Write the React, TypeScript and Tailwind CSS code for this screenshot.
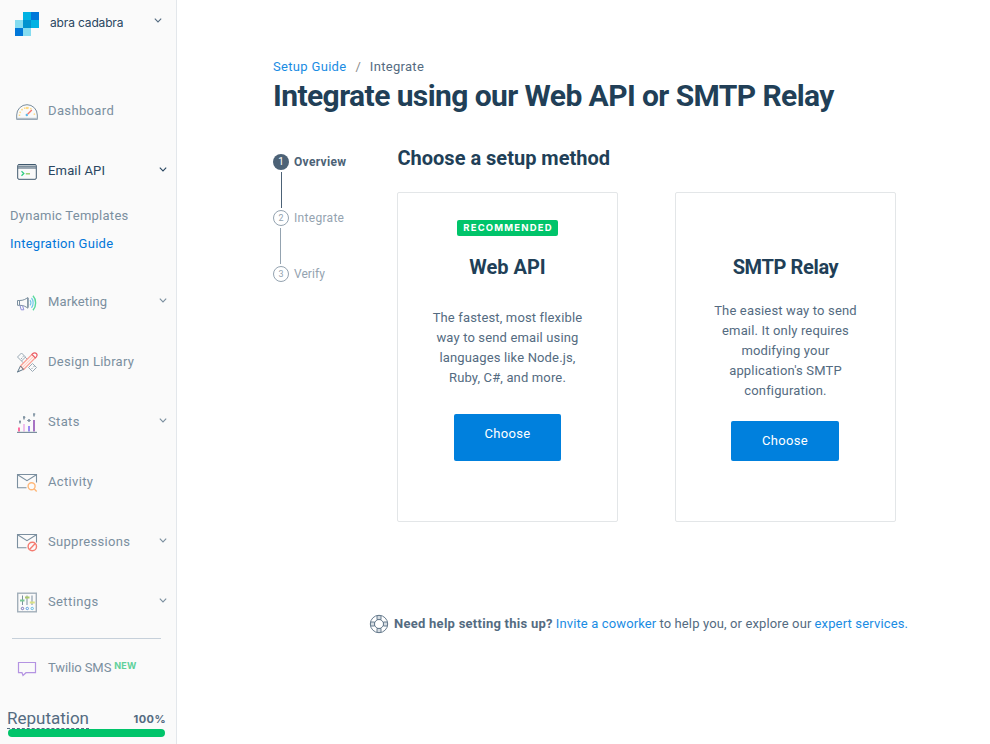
import type { ReactNode } from "react";

const slate = "#7b8f9f";

function Chevron({ className = "" }: { className?: string }) {
  return (
    <svg className={className} width="8" height="5" viewBox="0 0 8 5" fill="none" stroke="currentColor" strokeWidth="1.1">
      <path d="M0.8 0.7 4 3.9 7.2 0.7" />
    </svg>
  );
}

function Logo() {
  return (
    <svg width="24" height="24" viewBox="0 0 24 24" shapeRendering="crispEdges">
      <path fill="#00b2e3" d="M8 0h8v8H8zM16 8h8v8h-8z" />
      <path fill="#0077d9" d="M16 0h8v8h-8zM0 16h8v8H0z" />
      <path fill="#85dcf0" d="M0 8h8v8H0zM8 16h8v8H8z" />
      <path fill="#0093d0" d="M8 8h8v8H8z" />
    </svg>
  );
}

function Icon({ children }: { children: ReactNode }) {
  return (
    <svg className="shrink-0" width="22" height="22" viewBox="0 0 22 22" fill="none" stroke={slate} strokeWidth="1">
      {children}
    </svg>
  );
}

const DashboardIcon = () => (
  <Icon>
    <path d="M.7 19.400V15a10.300 10.300 0 0 1 20.600 0v4.400z" />
    <path d="M.7 18.600h20.600" stroke="#b4bfc8" strokeWidth="1.600" />
    <path d="M3.500 16a7.600 7.600 0 0 1 13-6M18.200 13.500a7 7 0 0 1 .4 2.500" stroke="#ffd982" strokeWidth="1.500" strokeDasharray="1.500 1.600" />
    <path d="M9.800 8h2.600" stroke="#ffd982" strokeWidth="2.200" />
    <path d="m11.600 14.300 4.200-4.300" stroke="#f5796c" strokeWidth="1.400" />
    <circle cx="10.800" cy="15" r="1.200" fill="#5cb9e8" stroke="none" />
  </Icon>
);

const EmailIcon = () => (
  <Icon>
    <rect x="1.700" y="4.500" width="18.600" height="14.800" rx="1.300" stroke="#40596e" />
    <path d="M2 6.300h18" stroke="#7c8e9c" strokeWidth="1.600" />
    <path d="M2 8h18" stroke="#40596e" />
    <path d="m5.500 11.200 2.300 2.200-2.300 2.300" stroke="#2dcc80" strokeWidth="1.300" />
    <path d="M9.800 13.800h4.200" stroke="#8bc75b" strokeWidth="1.300" />
  </Icon>
);

const MarketingIcon = () => (
  <Icon>
    <g transform="translate(0 1)">
      <path d="M1.500 8.500h2v4.800h-2zM3.500 8.500c4 0 6-1.300 8.300-3v10.700c-2.300-1.800-4.300-2.900-8.300-2.900z" />
      <path d="m4 13.500 1.200 4.300h2.600L6.500 13.500" stroke="#8f8edb" />
      <path d="M12 6v9.500" strokeWidth="1.300" />
      <path d="M14 8.200c1 1.300 1 3.800 0 5.200M15.500 6c2.200 2.300 2.200 7.400 0 9.800" stroke="#70c7e9" strokeWidth="1.200" />
      <path d="M17 3.700c3.500 3.800 3.500 10.600 0 14.500" stroke="#57d99b" strokeWidth="1.400" />
    </g>
  </Icon>
);

const DesignIcon = () => (
  <Icon>
    <g transform="translate(0 .5)">
      <path d="m5.500 1.500 4 4-4 4-4-4zM9 5.500l2.500 2.500M5.500 9.500l2.500 2.500M12.500 16l4 4 4-4-4-4z" stroke="#9aa9b5" />
      <path d="m6.500 5.500 1.300-1M5 7.500l1-1M15.500 17.500l1.200-1.200M17.500 15.500l1-1" stroke="#9aa9b5" />
      <path d="M4.500 14.500 16.300 2.700l3.300 3.300L7.600 18z" fill="#fff3f0" stroke="#fa9f94" strokeWidth="1.200" />
      <path d="M6 16.300 17.800 4.500" stroke="#fdc8bf" />
      <path d="m16 3 1-1c1-1 2.500-.8 3.300 0s1 2.200 0 3.300l-1 1z" stroke="#ec5e66" fill="#fafafa" strokeWidth="1.200" />
      <path d="m4.500 14.500-3 6 6-2.700zM1.500 20.500l1.800-1" stroke="#61788a" />
    </g>
  </Icon>
);

const StatsIcon = () => (
  <Icon>
    <path d="M3 20.500v-4" stroke="#ff6da0" strokeWidth="2" />
    <path d="M8 20.500V13" stroke="#efbfec" strokeWidth="2" />
    <path d="M13 20.500V15" stroke="#9b89f5" strokeWidth="2" />
    <path d="M18 20.500V9" stroke="#a773c4" strokeWidth="2" />
    <path d="M1 21.400h20" strokeWidth="1.200" />
    <path d="M4 9.500v3M8 5v3.500M13 8v3M18 2.500v3" strokeWidth="1.500" />
    <path d="M3 10.700h2M7 6.300h2.400M11.200 9.500h3.600M17 3h2.300" />
  </Icon>
);

const Envelope = () => <path d="M20.500 11.500v-8h-19v13.200h9M1.600 3.800 11 9.700l9.400-5.900" strokeWidth="1.100" />;

const ActivityIcon = () => (
  <Icon>
    <Envelope />
    <circle cx="15.600" cy="15.200" r="3.500" stroke="#ffb778" strokeWidth="1.400" fill="#fafafa" />
    <path d="m18.100 17.700 2.600 2.800" stroke="#ffb778" strokeWidth="1.400" />
  </Icon>
);

const SuppressionsIcon = () => (
  <Icon>
    <Envelope />
    <circle cx="16.300" cy="15.500" r="4.200" stroke="#f47b70" strokeWidth="1.400" fill="#fafafa" />
    <path d="m13.500 18.400 5.700-5.800" stroke="#f47b70" strokeWidth="1.400" />
  </Icon>
);

const SettingsIcon = () => (
  <Icon>
    <g transform="translate(0 .5)">
      <rect x="1.700" y="1.700" width="18.600" height="18.600" strokeWidth="1.400" stroke="#a2afba" />
      <path d="M6.500 4v9.500M11 4v9.500M16 4v9.500" />
      <path d="M4 9h4.500" stroke="#7bc894" strokeWidth="2" />
      <path d="M9 6h4.500" stroke="#aac96b" strokeWidth="2" />
      <path d="M13.800 11h5" stroke="#dbe384" strokeWidth="2" />
      <circle cx="6.500" cy="17" r="1.200" stroke="#7871b8" />
      <circle cx="11.300" cy="17" r="1.200" stroke="#5d9fe0" />
      <circle cx="16.200" cy="17" r="1.200" stroke="#65bfe5" />
    </g>
  </Icon>
);

const SmsIcon = () => (
  <Icon>
    <path d="M2.500 5.500h17v10.200H10L7 18.500l-1-2.800H2.500z" stroke="#b493e2" strokeWidth="1.200" />
  </Icon>
);

function NavItem({ icon, children, chevron, active }: { icon: ReactNode; children: ReactNode; chevron?: boolean; active?: boolean }) {
  return (
    <a className={`flex h-[60px] items-center pl-4 pr-[9px] text-[13px] leading-5 ${active ? "text-[#294661]" : "text-[#7b8f9f]"}`}>
      <div className="flex h-5 w-8 shrink-0 items-center">{icon}</div>
      <div className="flex-1 whitespace-nowrap">{children}</div>
      {chevron && <Chevron className="mb-[3px]" />}
    </a>
  );
}

function Sidebar() {
  return (
    <aside className="flex h-full w-[177px] shrink-0 flex-col border-r border-[#e3e7eb] bg-[#fafafa]">
      <div className="flex h-12 items-center pl-[15px] pr-[14px]">
        <Logo />
        <span className="mb-[3px] ml-[11px] flex-1 font-['Inter',sans-serif] text-[12px] leading-5 tracking-[-0.15px] text-[#294661]">abra cadabra</span>
        <Chevron className="mb-2 text-[#546b81]" />
      </div>
      <nav className="mt-[33px] flex flex-col">
        <NavItem icon={<DashboardIcon />}><span className="tracking-[0.36px]">Dashboard</span></NavItem>
        <NavItem icon={<EmailIcon />} chevron active><span className="tracking-[0.17px]">Email API</span></NavItem>
        <div className="flex h-[71px] flex-col pl-[10px] pt-px text-[13px] leading-[28px]">
          <a className="tracking-[0.26px] text-[#7b8f9f]">Dynamic Templates</a>
          <a className="tracking-[0.25px] text-[#0277d9]">Integration Guide</a>
        </div>
        <NavItem icon={<MarketingIcon />} chevron><span className="tracking-[0.13px]">Marketing</span></NavItem>
        <NavItem icon={<DesignIcon />}><span className="tracking-[0.27px]">Design Library</span></NavItem>
        <NavItem icon={<StatsIcon />} chevron><span className="tracking-[0.35px]">Stats</span></NavItem>
        <NavItem icon={<ActivityIcon />}><span className="tracking-[0.35px]">Activity</span></NavItem>
        <NavItem icon={<SuppressionsIcon />} chevron><span className="tracking-[0.3px]">Suppressions</span></NavItem>
        <NavItem icon={<SettingsIcon />} chevron><span className="tracking-[0.38px]">Settings</span></NavItem>
      </nav>
      <div className="ml-3 mr-[15px] mt-[6px] h-px shrink-0 bg-[#c6d0da]" />
      <a className="mt-[19px] flex h-5 items-center pl-4 text-[13px] leading-5 text-[#7b8f9f]">
        <div className="w-8"><SmsIcon /></div>
        <span className="tracking-[-0.08px]">Twilio SMS</span>
        <span className="mb-1 ml-[3px] font-['Inter',sans-serif] text-[9px] font-bold leading-3 tracking-[0.17px] text-[#5fd09a]">NEW</span>
      </a>
      <div className="ml-[7px] mr-[10px] mt-[30px] flex h-[21px] items-center justify-between text-[#546b81]">
        <span className="h-5 border-b border-dashed border-[#546b81] text-[17px] leading-[18px]">Reputation</span>
        <span className="pt-0.5 font-['Inter',sans-serif] text-[11px] font-bold tracking-[0.42px]">100%</span>
      </div>
      <div className="ml-2 mr-[11px] h-2 shrink-0 rounded-full bg-[#00c46a]" />
    </aside>
  );
}

function Steps() {
  return (
    <ol className="flex w-[124.500px] shrink-0 flex-col pt-[7px] text-[12px] leading-4">
      <li className="flex items-center gap-[5px] font-bold text-[#4c6276]">
        <span className="flex size-4 items-center justify-center rounded-full bg-[#4c6276] text-[10px] font-normal text-white">1</span>
        <span className="tracking-[0.33px]">Overview</span>
      </li>
      <li className="my-0.5 ml-2 h-9 w-px bg-[#4c6276]" />
      <li className="flex items-center gap-[5px] text-[#94a3b0]">
        <span className="flex size-4 items-center justify-center rounded-full border border-[#94a3b0] text-[9px]">2</span>
        <span className="tracking-[0.3px]">Integrate</span>
      </li>
      <li className="my-0.5 ml-[7px] h-9 w-px bg-[#94a3b0]" />
      <li className="flex items-center gap-[5px] text-[#94a3b0]">
        <span className="flex size-4 items-center justify-center rounded-full border border-[#94a3b0] text-[9px]">3</span>
        <span className="tracking-[0.05px]">Verify</span>
      </li>
    </ol>
  );
}

function HelpIcon() {
  return (
    <svg width="20" height="20" viewBox="0 0 20 20" fill="none" stroke="#6a7e90">
      <path d="M8 1.500h4v4H8zM8 14.500h4v4H8zM1.500 8h4v4h-4zM14.500 8h4v4h-4z" fill="#d5dce2" />
      <circle cx="10" cy="10" r="8.700" />
      <circle cx="10" cy="10" r="4.500" />
    </svg>
  );
}

export default function App() {
  return (
    <div className="flex h-[744px] w-[990px] overflow-hidden bg-white font-['Roboto',sans-serif] text-[#546b81]">
      <Sidebar />
      <main className="flex flex-1 flex-col pl-24 pt-[57px]">
        <div className="flex h-5 items-center text-[13px] leading-5">
          <a className="tracking-[0.32px] text-[#1a8ce3]">Setup Guide</a>
          <span className="ml-[9px] mr-[9px] text-[#8b8b8b]">/</span>
          <span className="tracking-[0.3px]">Integrate</span>
        </div>
        <h1 className="-mt-px h-10 whitespace-nowrap text-[30px] font-bold leading-10 tracking-[-0.58px] text-[#213f57]">Integrate using our Web API or SMTP Relay</h1>
        <div className="mt-[31px] flex">
          <Steps />
          <div>
            <h2 className="h-[45px] text-[20px] font-bold leading-[22px] text-[#213f57]">Choose a setup method</h2>
            <div className="-ml-[0.500px] flex gap-[57px]">
              <section className="flex h-[330px] w-[221px] flex-col items-center rounded-xs border border-[#e3e6e8] pt-[27px] text-center">
                <span className="h-4 w-[101px] rounded-xs bg-[#00c46a] pl-px font-['Inter',sans-serif] text-[9.500px] font-bold leading-[16px] tracking-[1.17px] text-white">RECOMMENDED</span>
                <h3 className="mt-[18px] h-[26px] text-[20px] font-bold leading-[26px] text-[#213f57]">Web API</h3>
                <p className="mt-7 whitespace-nowrap text-[13px] leading-5 tracking-[0.15px]">
                  The fastest, most flexible<br />way to send email using<br />languages like Node.js,<br />Ruby, C#, and more.
                </p>
                <button className="mt-[26px] h-[47px] w-[107px] rounded-xs bg-[#0080dd] pb-[7px] text-[13px] leading-5 tracking-[0.29px] text-white">Choose</button>
              </section>
              <section className="flex h-[330px] w-[221px] flex-col items-center rounded-xs border border-[#e3e6e8] pt-[61px] text-center">
                <h3 className="h-[26px] text-[20px] font-bold leading-[26px] tracking-[-0.37px] text-[#213f57]">SMTP Relay</h3>
                <p className="mt-[21px] whitespace-nowrap text-[13px] leading-5 tracking-[0.16px]">
                  The easiest way to send<br />email. It only requires<br />modifying your<br />application's SMTP<br />configuration.
                </p>
                <button className="mr-px mt-5 h-10 w-[108px] rounded-xs bg-[#0080dd] text-[13px] leading-5 tracking-[0.29px] text-white">Choose</button>
              </section>
            </div>
          </div>
        </div>
        <div className="ml-24 mt-[92px] flex h-5 items-center whitespace-nowrap text-[13px] leading-5">
          <HelpIcon />
          <strong className="ml-[5px] tracking-[0.26px]">Need help setting this up?</strong>
          <a className="ml-[3px] tracking-[0.13px] text-[#1a8ce3]">Invite a coworker</a>
          <span className="ml-[3px] tracking-[0.13px]">to help you, or explore our</span>
          <a className="ml-[3px] tracking-[0.16px] text-[#1a8ce3]">expert services.</a>
        </div>
      </main>
    </div>
  );
}
